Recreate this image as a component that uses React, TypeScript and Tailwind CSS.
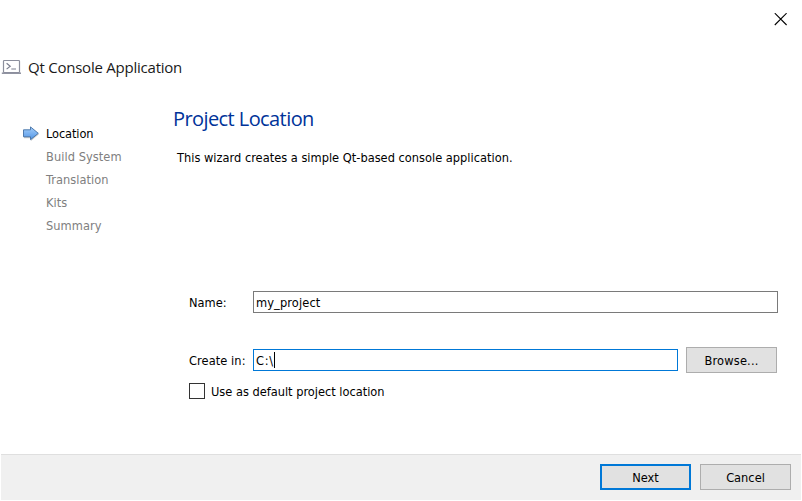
const steps = ["Location", "Build System", "Translation", "Kits", "Summary"];

function ConsoleIcon() {
  return (
    <svg width="20" height="16" viewBox="0 0 20 16" fill="none" className="shrink-0">
      <rect x="2.5" y="1.5" width="16" height="12" rx="0.8" stroke="#8c8f9d" strokeWidth="1.2" />
      <path d="M0.8 14.2H20" stroke="#8c8f9d" strokeWidth="1.5" />
      <path d="M5.6 4.3L9.2 7.2L5.6 10.1M10.3 10H15" stroke="#7b7e8e" strokeWidth="1.2" />
    </svg>
  );
}

function ArrowIcon() {
  return (
    <svg width="17" height="16" viewBox="0 0 17 16" className="shrink-0">
      <defs>
        <linearGradient id="arrowFill" x1="0" y1="0" x2="0" y2="1">
          <stop offset="0" stopColor="#a5cffb" />
          <stop offset="1" stopColor="#5195e6" />
        </linearGradient>
      </defs>
      <path d="M1 5.5H8V2L16 8.3L8 15V12.2H1Z" fill="#000" opacity="0.2" />
      <path d="M0.5 3.8H7.5V0.9L15.3 7.3L7.5 13.7V10.8H0.5Z" fill="url(#arrowFill)" stroke="#426fa5" strokeWidth="0.9" />
    </svg>
  );
}

export default function App() {
  return (
    <div className="flex h-[501px] w-[802px] flex-col overflow-hidden bg-white px-px pb-px font-['DejaVu_Sans_Condensed','DejaVu_Sans',sans-serif] text-[12.7px] leading-[16px] tracking-[0.01px] text-black">
      <div className="flex h-[38px] shrink-0 justify-end pt-[13px] pr-[14px]">
        <svg width="13" height="13" viewBox="0 0 13 13" stroke="#000" strokeWidth="1.1">
          <path d="M0.8 0.2L12.6 12M12.6 0.2L0.8 12" />
        </svg>
      </div>
      <header className="flex h-[58px] shrink-0 items-center gap-[7px] font-['Open_Sans',sans-serif] text-[15px] leading-5 tracking-[-0.23px] text-[#1a1a1a]">
        <ConsoleIcon />
        <h1 className="whitespace-nowrap">Qt Console Application</h1>
      </header>
      <main className="flex min-h-0 flex-1">
        <nav className="w-[172px] shrink-0 pt-[26px]">
          <ul>
            {steps.map((label, i) => (
              <li key={label} className="flex h-[23px] items-center pl-[22px]">
                <span className="w-[23px]">{i === 0 && <ArrowIcon />}</span>
                <span className={`whitespace-nowrap ${i === 0 ? "tracking-[-0.1px] text-black" : "tracking-[0.06px] text-[#808080]"}`}>{label}</span>
              </li>
            ))}
          </ul>
        </nav>
        <section className="flex flex-1 flex-col whitespace-nowrap">
          <h2 className="mt-[9px] h-[28px] font-['Open_Sans',sans-serif] text-[20px] leading-[28px] tracking-[-0.58px] text-[#003399]">Project Location</h2>
          <p className="mt-[17px] ml-[4px] h-[16px]">This wizard creates a simple Qt-based console application.</p>
          <div className="mt-[125px] ml-[16px] flex h-[22px] items-center">
            <label className="w-[64px] pt-px">Name:</label>
            <div className="flex h-[22px] w-[525px] items-center border border-[#7a7a7a] pl-[2px] pt-px tracking-[0.12px]">my_project</div>
          </div>
          <div className="mt-[34px] ml-[16px] flex h-[26px] items-center">
            <label className="w-[64px] pt-px tracking-[0.08px]">Create in:</label>
            <div className="flex h-[22px] w-[425px] items-center border border-[#0078d7] pl-[2px]">
              <span className="w-[18px] pt-px tracking-[0.7px]">C:\</span>
              <span className="h-[16px] w-px bg-black" />
            </div>
            <button className="ml-[8px] h-[26px] w-[91px] border border-[#adadad] bg-[#e1e1e1] pt-px tracking-[0.2px]">Browse...</button>
          </div>
          <label className="mt-[10px] ml-[16px] flex h-[16px] items-center gap-[6px]">
            <span className="h-[16px] w-[16px] border border-[#333]" />
            <span className="pt-px tracking-[-0.01px]">Use as default project location</span>
          </label>
        </section>
      </main>
      <footer className="flex h-[46px] shrink-0 justify-end gap-[9px] border-t border-[#dfdfdf] bg-[#f0f0f0] pt-[9px] pr-[10px]">
        <button className="h-[26px] w-[91px] border-2 border-[#0078d7] bg-[#e1e1e1] pt-px">Next</button>
        <button className="h-[26px] w-[91px] border border-[#adadad] bg-[#e1e1e1] pt-px">Cancel</button>
      </footer>
    </div>
  );
}
